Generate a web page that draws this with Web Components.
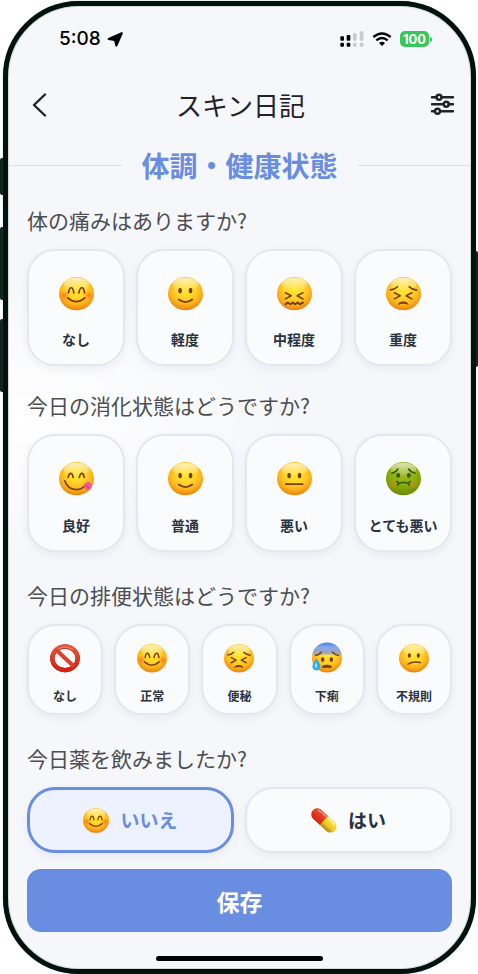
<!DOCTYPE html>
<html lang="ja">
<head>
<meta charset="utf-8">
<meta name="viewport" content="width=device-width, initial-scale=1">
<title>スキン日記</title>
<style>
  body {
    margin: 0;
    background: #fff;
    color: #1f2227;
    font-family: "Noto Sans CJK JP", "Noto Sans", sans-serif;
    --accent: #698de0;
    --line: #e2e8f0;
    --ink: #293241;
  }
</style>
</head>
<body>
<phone-frame>
  <status-bar time="5:08" battery="100"></status-bar>
  <app-header title="スキン日記"></app-header>
  <section-title>体調・健康状態</section-title>
  <diary-form>
    <choice-group name="pain" question="体の痛みはありますか?"
      options="blush:なし,smile:軽度,confounded:中程度,persevere:重度"></choice-group>
    <choice-group name="digestion" question="今日の消化状態はどうですか?"
      options="yum:良好,smile:普通,neutral:悪い,nauseated:とても悪い"></choice-group>
    <choice-group name="bowel" size="small" question="今日の排便状態はどうですか?"
      options="prohibited:なし,blush:正常,persevere:便秘,anxious:下痢,confused:不規則"></choice-group>
    <choice-group name="medicine" size="wide" selected="0" question="今日薬を飲みましたか?"
      options="blush:いいえ,pill:はい"></choice-group>
  </diary-form>
  <save-bar>保存</save-bar>
</phone-frame>

<script>
const eyes = (y) => `
  <ellipse cx="36" cy="${y}" rx="5.5" ry="8"/>
  <ellipse cx="67" cy="${y}" rx="5.5" ry="8"/>`;

const squint = `
  <path class="s" d="M25 47L42 56L25 65M77 47L60 56L77 65"/>`;

const arches = `
  <path class="s" d="M28 47Q31 32 36 32Q42 32 44 47M59 47Q62 32 68 32Q74 32 76 47"/>`;

// Features of each face, drawn over the shared ball (104 x 99)
const faces = {
  blush: `
    <ellipse cx="15" cy="55" rx="16" ry="15" fill="url(#blush)"/>
    <ellipse cx="89" cy="55" rx="16" ry="15" fill="url(#blush)"/>
    ${arches}
    <path class="s" d="M26 62Q51 85 77 62"/>`,
  smile: `${eyes(40)}<path class="s" d="M32 67Q52 82 72 67"/>`,
  confounded: `${squint}
    <path class="s" stroke-width="6" d="M25 81L32 76L40 81L47 76L54 81L61 76L68 81L77 76"/>`,
  persevere: `
    <path class="s" d="M13 38Q26 37 34 29M69 29Q78 37 91 39"/>
    ${squint}
    <path d="M35 83Q38 73 51 73Q64 73 67 83Q51 76 35 83Z"/>`,
  yum: `
    <path class="s" d="M27 46Q30 34 35 34Q40 34 42 46M60 46Q63 34 68 34Q73 34 75 46"/>
    <path class="s" d="M17 56Q26 82 52 82Q70 82 80 67"/>
    <path d="M74 70Q80 58 89 59Q99 64 97 76Q91 87 82 83Q73 78 74 70Z" fill="#f4579a"/>
    <path d="M79 70L89 76" fill="none" stroke="#d32d75" stroke-width="3"/>`,
  neutral: `${eyes(40)}<path class="s" d="M26 66H76"/>`,
  nauseated: `
    <ellipse cx="22" cy="67" rx="15" ry="14" fill="url(#sick)"/>
    <ellipse cx="82" cy="67" rx="15" ry="14" fill="url(#sick)"/>
    <g class="green">
      <path class="s" d="M18 33Q29 31 35 21M67 21Q74 31 86 33"/>
      <ellipse cx="36" cy="40" rx="6" ry="7"/>
      <ellipse cx="68" cy="40" rx="6" ry="7"/>
      <path class="s" d="M32 58Q40 61 35 69M72 58Q64 61 69 69M36 65Q52 56 68 65"/>
    </g>`,
  anxious: `
    <path d="M1 43A51 48 0 0 1 103 43Q52 31 1 43Z" fill="url(#cold)"/>
    <path class="s" d="M12 39Q25 38 32 28M71 28Q79 38 92 39"/>
    <ellipse cx="37" cy="54" rx="6" ry="8"/>
    <ellipse cx="67" cy="54" rx="6" ry="8"/>
    <path d="M34 81Q34 72 51 72Q69 72 69 81Q68 85 51 82Q35 85 34 81Z"/>
    <path d="M15 51Q29 71 28 79Q26 90 15 91Q3 90 2 79Q1 72 15 51Z" fill="#2aaef5" stroke="#2286d8" stroke-width="1"/>
    <path d="M14 63Q21 77 14 83Q6 80 14 63Z" fill="#b5ebff"/>`,
  confused: `${eyes(40)}<path class="s" d="M31 70Q48 59 74 64"/>`
};

// Signs and objects that have no ball behind them
const objects = {
  prohibited: `
    <ellipse cx="52" cy="50" rx="44" ry="41" fill="none" stroke="#8e1710" stroke-width="15"/>
    <ellipse cx="52" cy="49" rx="44" ry="41" fill="none" stroke="url(#red)" stroke-width="14"/>
    <path d="M21 20L83 78" stroke="#df3f2b" stroke-width="14"/>
    <path d="M26 18Q52 4 79 19" fill="none" stroke="#f58d7b" stroke-width="3"/>`,
  pill: `
    <g transform="rotate(43 52 49.5)">
      <rect x="-8" y="26" width="120" height="48" rx="24" fill="url(#yellow)"/>
      <path d="M52 26H16A24 24 0 0 0 16 74H52Z" fill="url(#red)"/>
      <path d="M8 35Q26 31 48 33" fill="none" stroke="#ff9c8b" stroke-width="5" stroke-linecap="round"/>
      <path d="M57 33Q80 31 96 35" fill="none" stroke="#fff3a2" stroke-width="5" stroke-linecap="round"/>
    </g>`
};

class EmojiIcon extends HTMLElement {
  constructor() {
    super();
    this.attachShadow({ mode: 'open' });
  }

  connectedCallback() {
    const name = this.getAttribute('name');
    const ball = name === 'nauseated' ? 'greenball' : 'ball';
    const art = objects[name]
      || `<ellipse cx="52" cy="49.5" rx="52" ry="49.5" fill="url(#${ball})"/>
          <ellipse cx="52" cy="22" rx="38" ry="20" fill="url(#shine)"/>${faces[name]}`;

    this.shadowRoot.innerHTML = `
      <style>
        :host {
          display: block;
          width: 35px;
          flex: none;
        }

        svg {
          display: block;
          width: 100%;
          overflow: visible;
          fill: #75400a;
          stroke-width: 5;
        }

        .s {
          fill: none;
          stroke: #75400a;
          stroke-linecap: round;
          stroke-linejoin: round;
        }

        .green {
          fill: #2c6503;
        }

        .green .s {
          stroke: #2c6503;
        }
      </style>
      <svg viewBox="0 0 104 99" aria-hidden="true">
        <defs>
          <radialGradient id="ball" cx=".5" cy=".36" r=".66">
            <stop offset="0" stop-color="#ffe832"/>
            <stop offset=".4" stop-color="#ffd62a"/>
            <stop offset=".72" stop-color="#fdb01b"/>
            <stop offset="1" stop-color="#e67d0a"/>
          </radialGradient>
          <radialGradient id="greenball" cx=".5" cy=".3" r=".7">
            <stop offset="0" stop-color="#a8bd2c"/>
            <stop offset=".6" stop-color="#8aab0c"/>
            <stop offset="1" stop-color="#668b05"/>
          </radialGradient>
          <linearGradient id="shine" x2="0" y2="1">
            <stop offset="0" stop-color="#fff" stop-opacity=".7"/>
            <stop offset="1" stop-color="#fff" stop-opacity="0"/>
          </linearGradient>
          <radialGradient id="blush">
            <stop offset="0" stop-color="#ff6a1c" stop-opacity=".8"/>
            <stop offset="1" stop-color="#ff7a1c" stop-opacity="0"/>
          </radialGradient>
          <radialGradient id="sick">
            <stop offset="0" stop-color="#c98a10"/>
            <stop offset="1" stop-color="#c98a10" stop-opacity="0"/>
          </radialGradient>
          <linearGradient id="cold" x2="0" y2="1">
            <stop offset="0" stop-color="#3f83ec"/>
            <stop offset=".35" stop-color="#8aa8e6"/>
            <stop offset=".75" stop-color="#9ba7ba"/>
            <stop offset="1" stop-color="#d9bd4e" stop-opacity=".4"/>
          </linearGradient>
          <linearGradient id="red" x2="0" y2="1">
            <stop offset="0" stop-color="#e9543c"/>
            <stop offset="1" stop-color="#d91f0d"/>
          </linearGradient>
          <linearGradient id="yellow" x2="0" y2="1">
            <stop offset="0" stop-color="#f8e04a"/>
            <stop offset=".6" stop-color="#f0cb27"/>
            <stop offset="1" stop-color="#a98512"/>
          </linearGradient>
        </defs>
        ${art}
      </svg>
    `;
  }
}

class PhoneFrame extends HTMLElement {
  constructor() {
    super();
    this.attachShadow({ mode: 'open' });
    this.shadowRoot.innerHTML = `
      <style>
        :host {
          display: block;
          position: relative;
          box-sizing: border-box;
          min-height: 100vh;
          padding: 1px 2px 1px 3px;
        }

        .screen {
          position: relative;
          display: flex;
          flex-direction: column;
          box-sizing: border-box;
          min-height: calc(100vh - 2px);
          border: 5px solid #04120e;
          border-radius: 76px;
          background:
            radial-gradient(ellipse 60% 14% at 0 43%, #fff, rgba(255, 255, 255, 0)),
            #f6f7fa;
          box-shadow: inset 0 0 0 1px #d5dad9, 0 0 1px #53645f;
        }

        .home {
          width: 36%;
          height: 5px;
          margin: auto auto 8px;
          border-radius: 3px;
          background: #000;
        }

        .key {
          position: absolute;
          left: 0;
          width: 4px;
          border-radius: 2px 0 0 2px;
          background: #0e231e;
        }

        .action { top: 158px; height: 37px; }
        .up { top: 227px; height: 73px; }
        .down { top: 319px; height: 73px; }

        .power {
          top: 251px;
          left: auto;
          right: 0;
          height: 116px;
          border-radius: 0 2px 2px 0;
        }
      </style>
      <i class="key action"></i>
      <i class="key up"></i>
      <i class="key down"></i>
      <i class="key power"></i>
      <div class="screen">
        <slot></slot>
        <div class="home"></div>
      </div>
    `;
  }
}

class StatusBar extends HTMLElement {
  constructor() {
    super();
    this.attachShadow({ mode: 'open' });
  }

  connectedCallback() {
    this.shadowRoot.innerHTML = `
      <style>
        :host {
          display: flex;
          align-items: center;
          justify-content: space-between;
          height: 66px;
          padding: 0 39px 0 51px;
          color: #000;
          font-family: Inter, sans-serif;
        }

        div {
          display: flex;
          align-items: center;
        }

        svg {
          display: block;
        }

        .left { gap: 6px; }
        .right { gap: 8px; }

        time {
          font-size: 19px;
          font-weight: 500;
          line-height: 24px;
        }

        .battery {
          display: flex;
          align-items: center;
          gap: 1px;
        }

        .level {
          width: 29px;
          border-radius: 5px;
          background: #35c759;
          color: #fff;
          font-size: 13px;
          font-weight: 700;
          line-height: 16px;
          text-align: center;
        }

        .nub {
          width: 2px;
          height: 5px;
          border-radius: 0 2px 2px 0;
          background: #35c759;
        }
      </style>
      <div class="left">
        <time>${this.getAttribute('time')}</time>
        <svg width="16" height="15" viewBox="0 0 48 45" aria-hidden="true">
          <path d="M43 1Q49 -1 47 5L31 42Q28 46 25 42L22 28Q21 26 19 26L4 24Q-1 21 4 18Z"/>
        </svg>
      </div>
      <div class="right">
        <svg width="24" height="16" viewBox="0 0 72 48" aria-hidden="true">
          <g>
            <rect x="1" y="16" width="11" height="13" rx="3"/>
            <rect x="1" y="35" width="11" height="12" rx="3"/>
            <rect x="20" y="12" width="11" height="17" rx="3"/>
            <rect x="20" y="35" width="11" height="12" rx="3"/>
          </g>
          <g fill="#c9cacc">
            <rect x="39" y="6" width="11" height="23" rx="3"/>
            <rect x="39" y="35" width="11" height="12" rx="3"/>
            <rect x="59" y="1" width="11" height="28" rx="3"/>
            <rect x="59" y="35" width="11" height="12" rx="3"/>
          </g>
        </svg>
        <svg width="20" height="15" viewBox="0 0 60 45" fill="none" stroke="#000" stroke-width="7" aria-hidden="true">
          <path d="M4 15Q30 -6 56 15M13 25Q30 11 47 25"/>
          <path d="M30 42L21 33Q30 25 39 33Z" fill="#000" stroke="none"/>
        </svg>
        <span class="battery">
          <span class="level">${this.getAttribute('battery')}</span>
          <i class="nub"></i>
        </span>
      </div>
    `;
  }
}

class AppHeader extends HTMLElement {
  constructor() {
    super();
    this.attachShadow({ mode: 'open' });
  }

  connectedCallback() {
    this.shadowRoot.innerHTML = `
      <style>
        :host {
          display: flex;
          align-items: center;
          justify-content: space-between;
          height: 66px;
          padding: 0 16px 0 20px;
        }

        h1 {
          margin: 0;
          font-size: 26px;
          font-weight: 400;
          line-height: 36px;
        }

        button {
          display: block;
          padding: 0;
          border: 0;
          background: none;
          color: inherit;
        }

        svg {
          display: block;
          fill: none;
          stroke: currentColor;
          stroke-linecap: round;
          stroke-linejoin: round;
        }
      </style>
      <button type="button" aria-label="戻る">
        <svg width="24" height="24" viewBox="0 0 24 24" stroke-width="2.4">
          <path d="M17 1.5L6 12L17 22.5"/>
        </svg>
      </button>
      <h1>${this.getAttribute('title')}</h1>
      <button type="button" aria-label="設定">
        <svg width="26" height="24" viewBox="0 0 26 24" stroke-width="2.4">
          <path d="M3 4.3H7.5M12.5 4.3H24M3 11.3H14.5M19.5 11.3H24M3 18.3H6M11 18.3H24"/>
          <circle cx="10" cy="4.3" r="2.5"/>
          <circle cx="17.3" cy="11.3" r="2.5"/>
          <circle cx="8.5" cy="18.3" r="2.5"/>
        </svg>
      </button>
    `;
  }
}

class SectionTitle extends HTMLElement {
  constructor() {
    super();
    this.attachShadow({ mode: 'open' });
    this.shadowRoot.innerHTML = `
      <style>
        :host {
          display: flex;
          align-items: center;
          gap: 20px;
          height: 54px;
        }

        :host::before,
        :host::after {
          content: "";
          flex: 1;
          height: 1px;
          background: #dde1e7;
        }

        h2 {
          margin: 0;
          color: var(--accent);
          font-size: 28px;
          font-weight: 700;
          line-height: 40px;
        }
      </style>
      <h2><slot></slot></h2>
    `;
  }
}

class DiaryForm extends HTMLElement {
  constructor() {
    super();
    this.attachShadow({ mode: 'open' });
    this.shadowRoot.innerHTML = `
      <style>
        :host {
          display: flex;
          flex-direction: column;
          gap: 24px;
          padding: 13px 19px 16px;
        }
      </style>
      <slot></slot>
    `;
  }
}

class ChoiceGroup extends HTMLElement {
  constructor() {
    super();
    this.attachShadow({ mode: 'open' });
  }

  connectedCallback() {
    const name = this.getAttribute('name');
    const selected = this.getAttribute('selected');
    const options = this.getAttribute('options').split(',').map((item) => item.split(':'));

    this.shadowRoot.innerHTML = `
      <style>
        :host {
          display: block;
        }

        :host([size]) {
          padding-top: 4px;
        }

        fieldset {
          min-width: 0;
          margin: 0;
          padding: 0;
          border: 0;
        }

        legend {
          margin-bottom: 14px;
          padding: 0;
          color: #4c4e52;
          font-size: 21px;
          line-height: 30px;
        }

        .row {
          display: grid;
          grid-auto-flow: column;
          grid-auto-columns: minmax(0, 1fr);
          gap: 11px;
        }

        label {
          display: flex;
          flex-direction: column;
          align-items: center;
          gap: 19px;
          box-sizing: border-box;
          padding: 26px 0 15px;
          border: 2px solid var(--line);
          border-radius: 28px;
          background: #fafbfd;
          box-shadow: 0 3px 8px rgba(30, 40, 60, 0.06);
          color: var(--ink);
          font-size: 14px;
          font-weight: 700;
          line-height: 20px;
          white-space: nowrap;
          cursor: pointer;
        }

        input {
          position: absolute;
          opacity: 0;
          pointer-events: none;
        }

        :host([size="small"]) label {
          gap: 16px;
          padding: 18px 0 9px;
          font-size: 12px;
          line-height: 16px;
        }

        :host([size="small"]) emoji-icon {
          width: 30px;
        }

        :host([size="wide"]) label {
          flex-direction: row;
          justify-content: center;
          gap: 11px;
          min-height: 66px;
          padding: 0;
          font-size: 19px;
          line-height: 28px;
        }

        :host([size="wide"]) emoji-icon {
          width: 26px;
        }

        label:has(input:checked) {
          border: 3px solid var(--accent);
          background: #eef2ff;
          box-shadow: 0 3px 8px rgba(105, 141, 224, 0.12);
          color: var(--accent);
        }

        label:has(input:focus-visible) {
          outline: 2px solid var(--accent);
        }
      </style>
      <fieldset>
        <legend>${this.getAttribute('question')}</legend>
        <div class="row">
          ${options.map(([icon, text], i) => `
            <label>
              <input type="radio" name="${name}" value="${i}"${selected === String(i) ? ' checked' : ''}>
              <emoji-icon name="${icon}"></emoji-icon>
              <span>${text}</span>
            </label>`).join('')}
        </div>
      </fieldset>
    `;
  }
}

class SaveBar extends HTMLElement {
  constructor() {
    super();
    this.attachShadow({ mode: 'open' });
    this.shadowRoot.innerHTML = `
      <style>
        :host {
          display: block;
          padding: 0 19px 24px;
        }

        button {
          display: block;
          width: 100%;
          padding: 15px 0 14px;
          border: 0;
          border-radius: 14px;
          background: var(--accent);
          color: #fff;
          font: inherit;
          font-size: 23px;
          font-weight: 700;
          line-height: 34px;
          cursor: pointer;
        }
      </style>
      <button type="button"><slot></slot></button>
    `;
  }
}

customElements.define('emoji-icon', EmojiIcon);
customElements.define('phone-frame', PhoneFrame);
customElements.define('status-bar', StatusBar);
customElements.define('app-header', AppHeader);
customElements.define('section-title', SectionTitle);
customElements.define('diary-form', DiaryForm);
customElements.define('choice-group', ChoiceGroup);
customElements.define('save-bar', SaveBar);
</script>
</body>
</html>
